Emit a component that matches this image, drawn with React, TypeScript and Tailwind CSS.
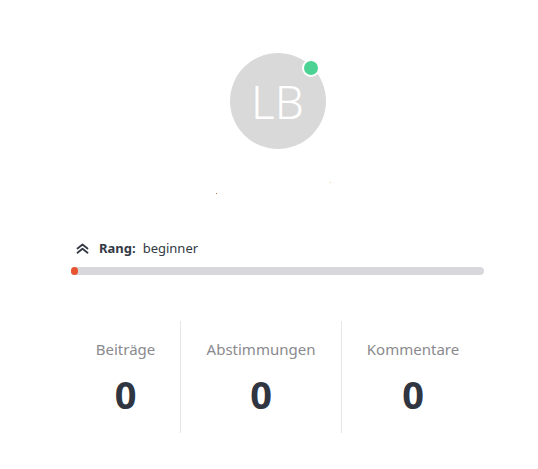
function RankIcon(): React.ReactElement {
    return (
        <svg width="13" height="11" viewBox="0 0 13 11" fill="none" stroke="currentColor" strokeWidth="1.8" strokeLinecap="round" strokeLinejoin="round">
            <polyline points="1.5,5.5 6.5,1.5 11.5,5.5" />
            <polyline points="1.5,9.8 6.5,5.8 11.5,9.8" />
        </svg>
    );
}

function Stat({ label, value, className }: { label: string; value: number; className: string }): React.ReactElement {
    return (
        <div className={`flex flex-col items-center h-[112px] pt-[18px] ${className}`}>
            <span className="text-[15px] leading-[20px] text-[#8a8a8e]">{label}</span>
            <span className="mt-[13px] text-[38px] leading-[44px] font-bold text-[#2f3541]">{value}</span>
        </div>
    );
}

function App(): React.ReactElement {
    return (
        <div className="w-[538px] h-[469px] bg-white font-['Noto_Sans','Lato',sans-serif]">
            <div className="ml-[71px] w-[413px] pt-[53px] flex flex-col">
                <div className="flex justify-center">
                    <div className="relative w-[96px] h-[96px] rounded-full bg-[#d9d9d9] flex items-center justify-center">
                        <span className="text-[46px] leading-none text-white font-light">LB</span>
                        <span className="absolute top-[6px] right-[6px] w-[18px] h-[18px] rounded-full bg-[#4cd394] border-2 border-white" />
                    </div>
                </div>

                <div className="h-[60px] relative">
                    <span className="absolute left-[145px] top-[44px] w-[1px] h-[1px] bg-[#c07050]" />
                    <span className="absolute left-[259px] top-[33px] w-[1px] h-[1px] bg-[#f0d090]" />
                </div>

                <div className="flex items-center gap-[6px] pl-[5px] text-[13px] leading-[18px] text-[#333a45] mt-[30px]">
                    <RankIcon />
                    <span className="font-bold ml-[4px]">Rang:</span>
                    <span className="ml-[1px]">beginner</span>
                </div>

                <div className="mt-[10px] h-[8px] rounded-full bg-[#d8d8dc] relative">
                    <span className="absolute left-0 top-0 w-[7px] h-[8px] rounded-full bg-[#e8542f]" />
                </div>

                <div className="mt-[46px] flex">
                    <Stat label="Beiträge" value={0} className="w-[110px] border-r border-[#e6e6e6]" />
                    <Stat label="Abstimmungen" value={0} className="w-[161px] border-r border-[#e6e6e6]" />
                    <Stat label="Kommentare" value={0} className="flex-1" />
                </div>
            </div>
        </div>
    );
}

export default App;
